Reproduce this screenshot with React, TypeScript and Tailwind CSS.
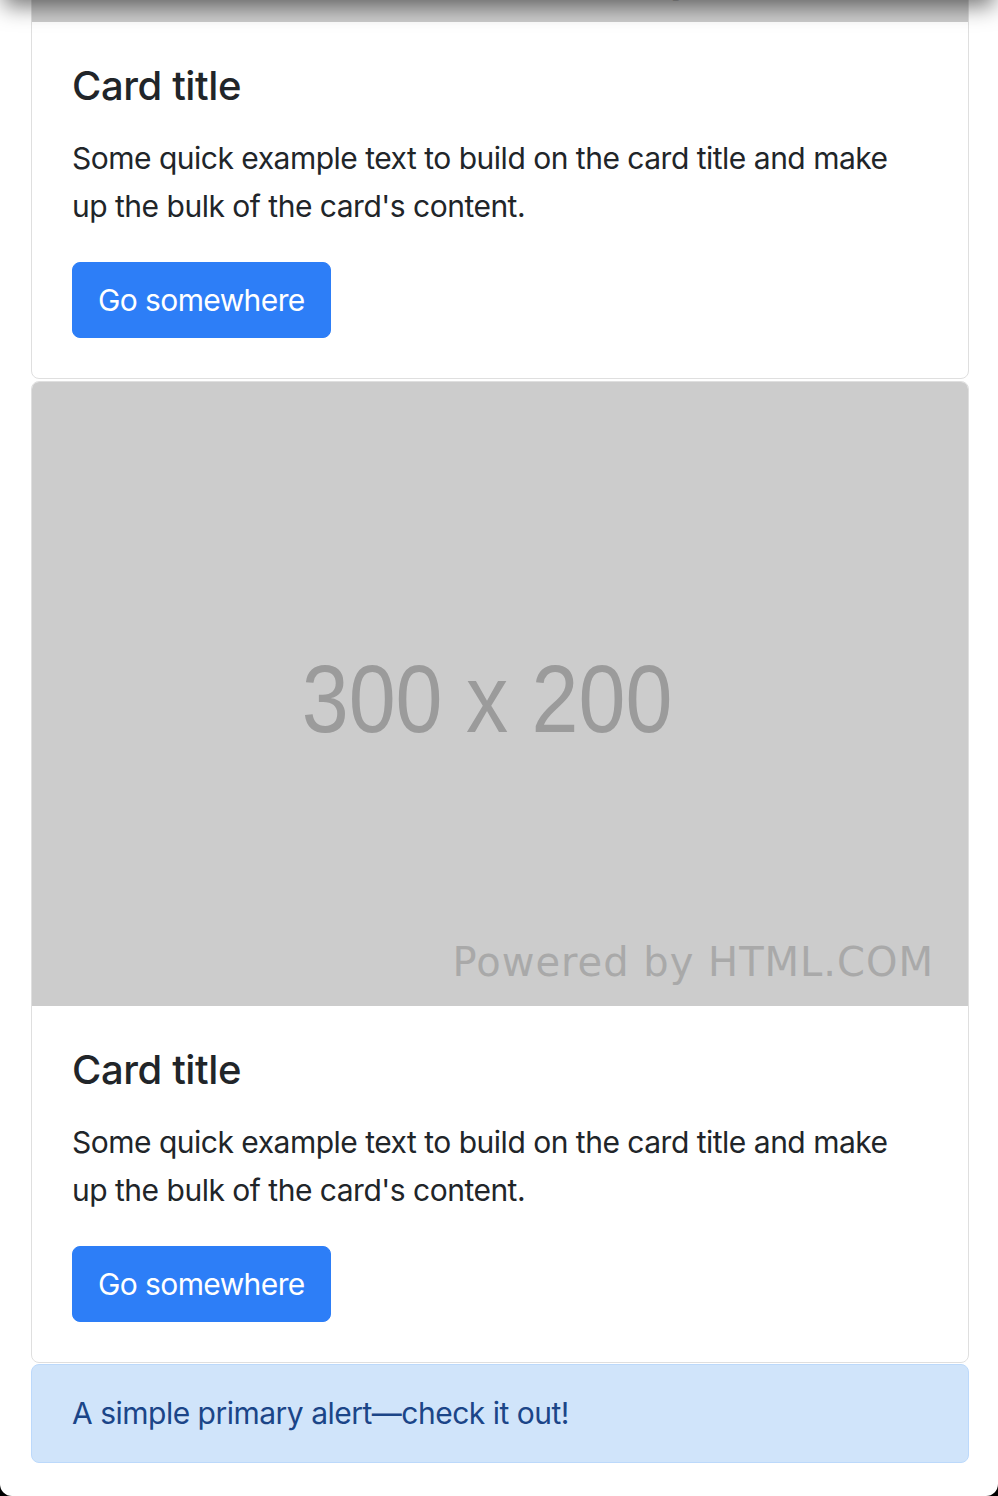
import React from "react";

function Card({ className = "" }: { className?: string }) {
  return (
    <div className={"flex flex-col rounded-[8px] border border-[#dfdfdf] bg-white " + className}>
      <div className="relative h-[624px] overflow-hidden rounded-t-[7px] bg-[#cccccc]">
        <div className="absolute inset-0 flex items-center justify-center pr-[26px] pt-[8px]">
          <span className="inline-block origin-center scale-x-[0.87] font-['Liberation_Sans',Arial,sans-serif] text-[97px] leading-none text-[#9b9b9b]">
            300 x 200
          </span>
        </div>
        <span className="absolute right-[34px] bottom-[24px] font-['DejaVu_Sans',Verdana,sans-serif] text-[40px] leading-none tracking-[1px] text-[#a9a9a9]">
          Powered by HTML.COM
        </span>
      </div>
      <div className="p-[40px] font-['Inter',sans-serif] text-[#212529]">
        <h5 className="mb-[24px] text-[40px] leading-[48px] font-medium tracking-[-0.4px]">Card title</h5>
        <p className="mb-[32px] text-[30px] leading-[48px] tracking-[-0.5px]">
          Some quick example text to build on the card title and make up the bulk of the card's content.
        </p>
        <a className="inline-block rounded-[8px] border border-[#2d7ef7] bg-[#2d7ef7] px-[25px] py-[13px] text-[30px] leading-[48px] tracking-[-0.6px] text-white">
          Go somewhere
        </a>
      </div>
    </div>
  );
}

export default function App() {
  return (
    <div className="relative h-[1496px] w-[998px] overflow-hidden bg-black">
      <div className="relative h-full w-full overflow-hidden rounded-b-[12px] bg-white">
        <div className="flex flex-col pl-[31px] pr-[29px]">
          <Card className="mt-[-603px]" />
          <Card className="mt-[2px]" />
          <div className="mt-[1px] rounded-[8px] border border-[#bcd9fb] bg-[#d0e4fa] px-[40px] pt-[24px] pb-[25px] font-['Inter',sans-serif] text-[30px] leading-[48px] tracking-[-0.5px] text-[#1b4588]">
            A simple primary alert—check it out!
          </div>
        </div>
        <div className="pointer-events-none absolute top-[-24px] right-[10px] left-[10px] h-[24px] shadow-[0_0_22px_6px_rgba(0,0,0,0.55)]" />
      </div>
    </div>
  );
}
